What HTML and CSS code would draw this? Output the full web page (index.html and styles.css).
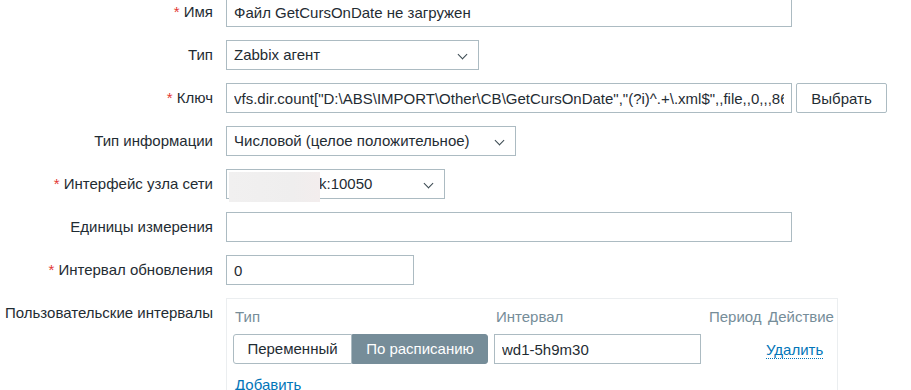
FILE: index.html
```html
<!DOCTYPE html>
<html lang="ru">
<head>
  <meta charset="UTF-8">
  <title>Элемент данных</title>
  <link rel="stylesheet" href="styles.css">
</head>
<body>

  <!-- форма элемента данных -->
  <div class="form">

    <div class="row">
      <label class="label"><span class="req">*</span> Имя</label>
      <div class="field">
        <input class="input w-wide" type="text" value="Файл GetCursOnDate не загружен">
      </div>
    </div>

    <div class="row">
      <label class="label">Тип</label>
      <div class="field">
        <div class="select w-type">Zabbix агент<span class="arrow"></span></div>
      </div>
    </div>

    <div class="row">
      <label class="label"><span class="req">*</span> Ключ</label>
      <div class="field">
        <input class="input w-wide" type="text" value='vfs.dir.count["D:\ABS\IMPORT\Other\CB\GetCursOnDate","(?i)^.+\.xml$",,file,,0,,,86400]'>
        <button class="btn">Выбрать</button>
      </div>
    </div>

    <div class="row">
      <label class="label">Тип информации</label>
      <div class="field">
        <div class="select w-info">Числовой (целое положительное)<span class="arrow"></span></div>
      </div>
    </div>

    <div class="row">
      <label class="label"><span class="req">*</span> Интерфейс узла сети</label>
      <div class="field">
        <div class="select w-iface"><span class="masked"></span><span class="port">k:10050</span><span class="arrow"></span></div>
      </div>
    </div>

    <div class="row">
      <label class="label">Единицы измерения</label>
      <div class="field">
        <input class="input w-wide" type="text" value="">
      </div>
    </div>

    <div class="row">
      <label class="label"><span class="req">*</span> Интервал обновления</label>
      <div class="field">
        <input class="input w-delay" type="text" value="0">
      </div>
    </div>

    <div class="row">
      <label class="label">Пользовательские интервалы</label>
      <div class="field">
        <div class="intervals">
          <div class="iv-head">
            <span class="c-type">Тип</span>
            <span class="c-int">Интервал</span>
            <span class="c-per">Период</span>
            <span class="c-act">Действие</span>
          </div>
          <div class="iv-row">
            <div class="c-type toggle">
              <span class="tg">Переменный</span>
              <span class="tg on">По расписанию</span>
            </div>
            <div class="c-int"><input class="input w-int" type="text" value="wd1-5h9m30"></div>
            <div class="c-per"></div>
            <div class="c-act"><a class="link" href="#">Удалить</a></div>
          </div>
          <div class="iv-add"><a class="link-add" href="#">Добавить</a></div>
        </div>
      </div>
    </div>

  </div>

</body>
</html>
```

FILE: styles.css
```css
/* общие */
body {
  margin: 0;
  background: #fff;
  font-family: 'Liberation Sans', Arial, sans-serif;
  font-size: 15px;
  color: #1f2c33;
  overflow: hidden;
}

.form {
  margin-top: -3px;
}

/* строка формы */
.row {
  display: flex;
  align-items: flex-start;
  margin-bottom: 13px;
}

.label {
  width: 213px;
  flex: none;
  padding-right: 13px;
  text-align: right;
  line-height: 30px;
  white-space: nowrap;
}

.req {
  color: #e33734;
}

.field {
  display: flex;
  gap: 4px;
}

/* поля ввода */
.input,
.select {
  box-sizing: border-box;
  height: 30px;
  border: 1px solid #acbbc2;
  background: #fff;
  font-family: inherit;
  font-size: 15px;
  color: #1f2c33;
  padding: 0 7px;
  outline: none;
}

.select {
  position: relative;
  line-height: 28px;
  white-space: nowrap;
}

.arrow {
  position: absolute;
  right: 12px;
  top: 10px;
  width: 6px;
  height: 6px;
  border-right: 1px solid #3a4850;
  border-bottom: 1px solid #3a4850;
  transform: rotate(45deg);
}

.w-wide { width: 566px; }
.w-type { width: 253px; }
.w-info { width: 290px; }
.w-iface { width: 219px; }
.w-delay { width: 188px; }
.w-int { width: 207px; }

/* скрытый адрес */
.masked {
  position: absolute;
  left: 2px;
  top: 2px;
  width: 91px;
  height: 30px;
  background: linear-gradient(90deg, #f1f0f0, #efeeee 70%, #f3eded);
}

.port {
  padding-left: 85px;
}

.btn {
  box-sizing: border-box;
  height: 30px;
  width: 91px;
  border: 1px solid #acbbc2;
  border-radius: 2px;
  background: #fff;
  font-family: inherit;
  font-size: 15px;
  color: #1f2c33;
}

/* пользовательские интервалы */
.intervals {
  box-sizing: border-box;
  width: 612px;
  height: 120px;
  border: 1px solid #ebeef0;
  padding: 6px 6px 0 6px;
}

.iv-head,
.iv-row {
  display: flex;
  align-items: center;
}

.iv-head {
  color: #768d99;
  height: 20px;
  margin-top: 1px;
  margin-bottom: 8px;
}

.c-type { width: 261px; flex: none; }
.c-int { width: 213px; flex: none; }
.c-per { width: 59px; flex: none; }
.c-act { flex: 1; }

.iv-head .c-type { padding-left: 2px; }

.toggle {
  display: flex;
  width: 255px;
  margin-right: 6px;
}

.tg {
  box-sizing: border-box;
  height: 30px;
  line-height: 28px;
  text-align: center;
  border: 1px solid #acbbc2;
  width: 119px;
  border-radius: 3px 0 0 3px;
}

.tg.on {
  width: 136px;
  background: #768d99;
  border-color: #768d99;
  color: #fff;
  border-radius: 0 3px 3px 0;
}

.link {
  color: #0275b8;
  text-decoration: none;
  border-bottom: 1px dotted #0275b8;
}

.iv-add {
  margin-top: 12px;
}

.link-add {
  color: #0275b8;
  text-decoration: none;
  padding-left: 2px;
}
```
